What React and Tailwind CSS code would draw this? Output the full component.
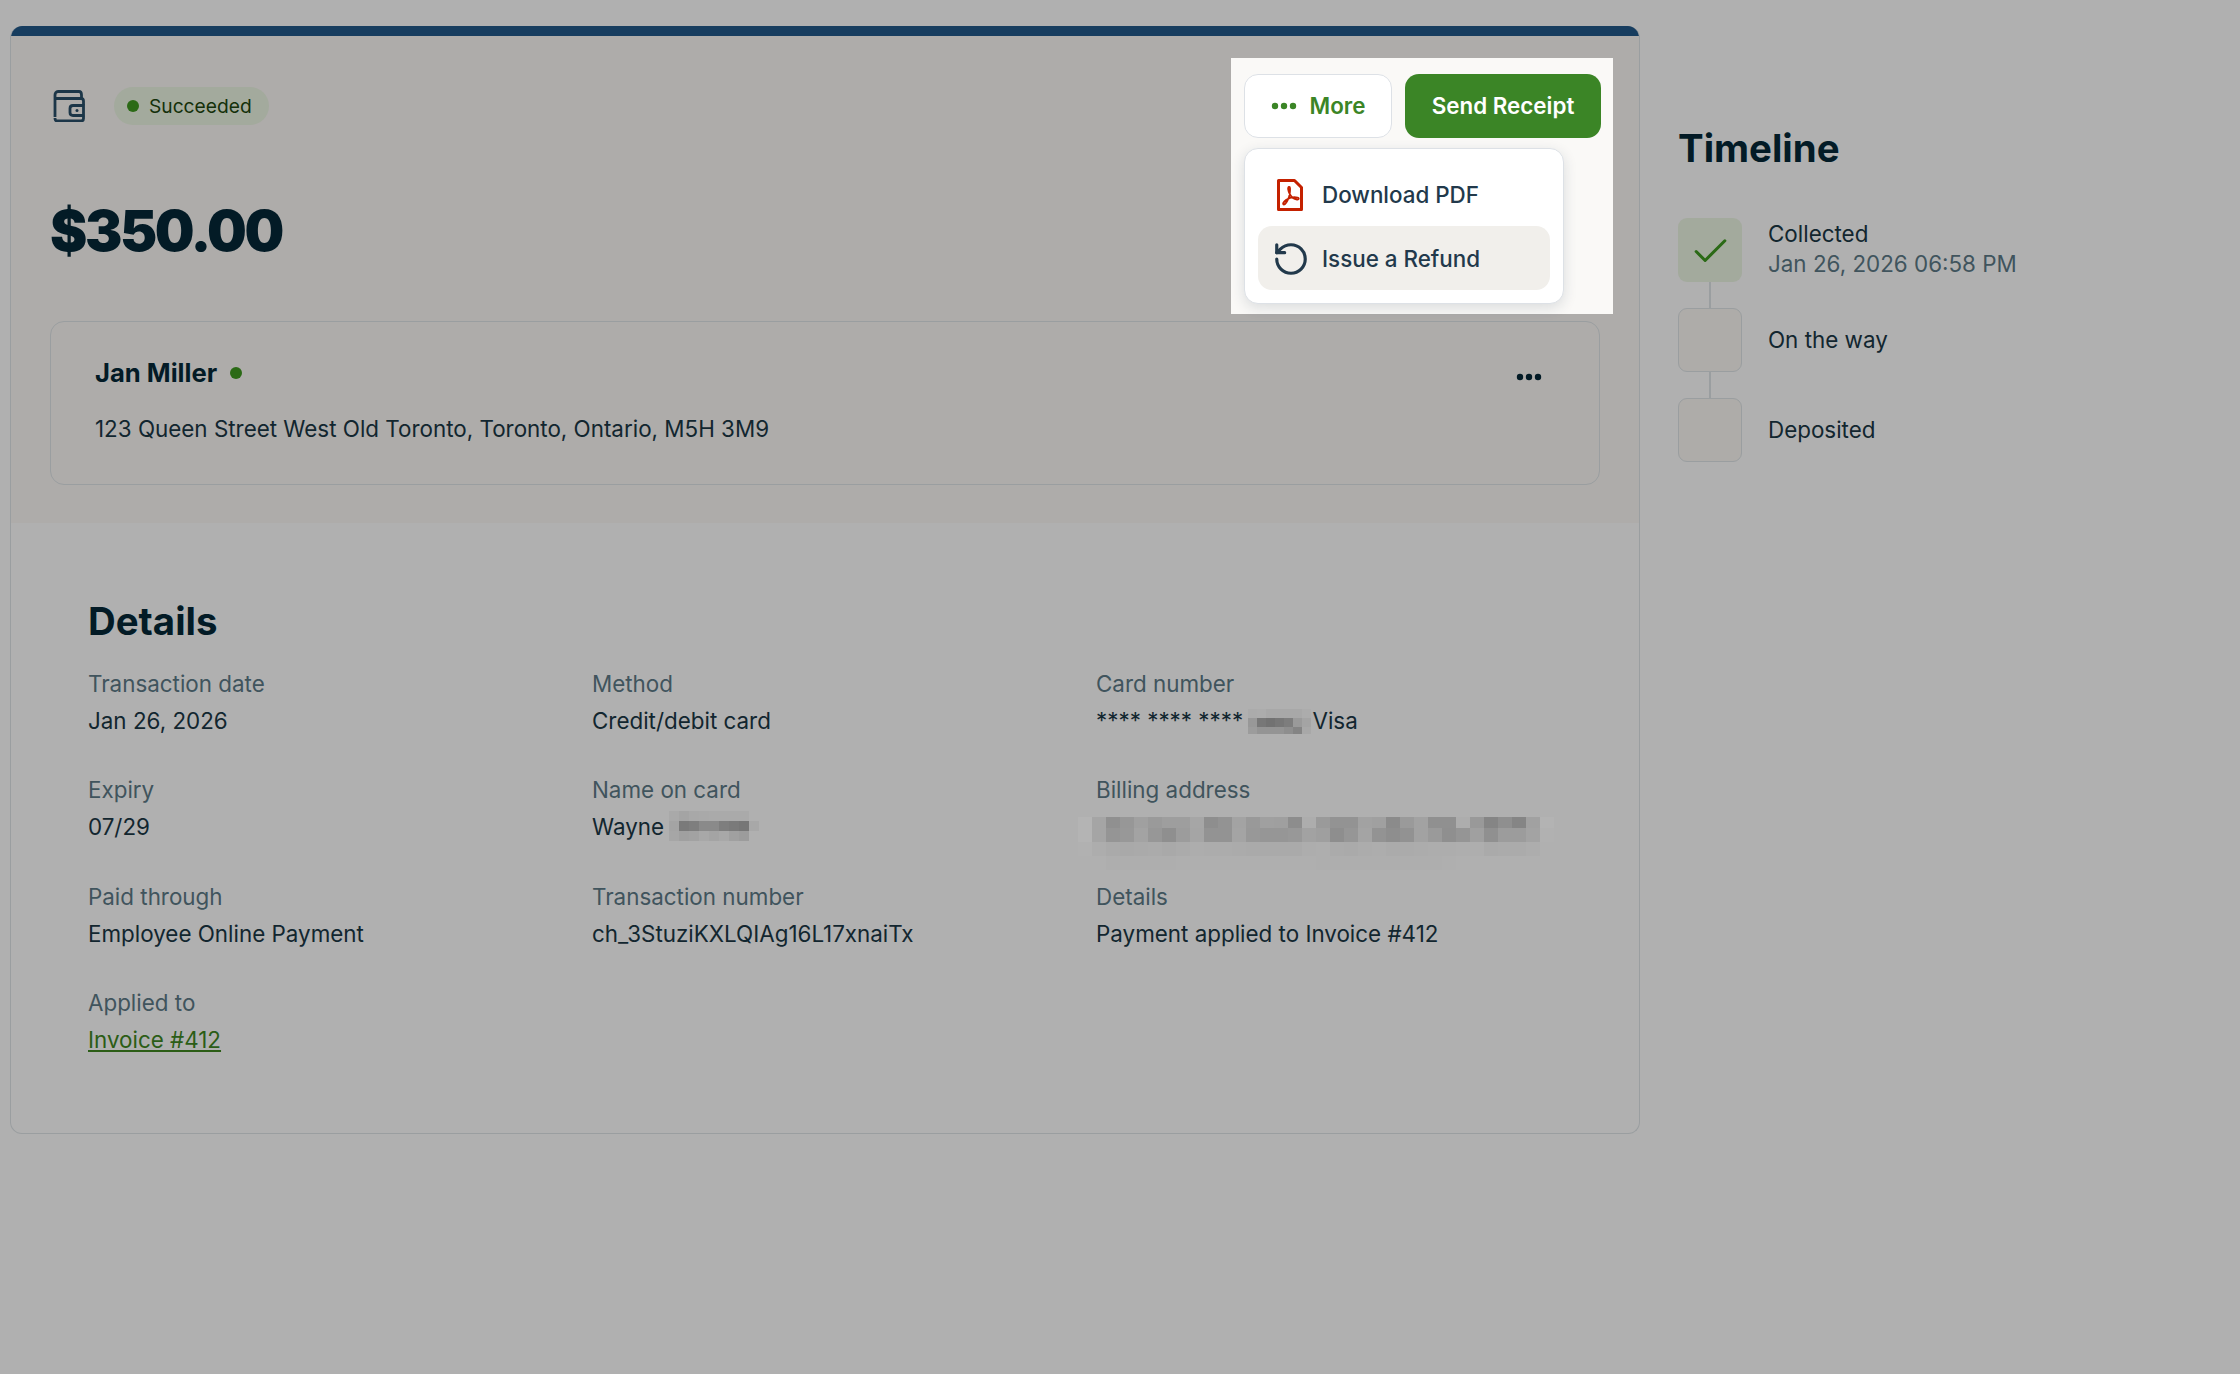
import { Check, RotateCcw } from 'lucide-react';

const billingRows = [
  'b4 a5 90 97 a0 9a 9e 9e a6 8e 93 a3 99 a0 9f 8d ad 9a 93 93 a2 a0 8b 9a a2 90 90 ad 99 85 8f 85 a1 b3 b0',
  'b4 a5 95 98 a3 97 8f 9c a5 93 93 a4 98 96 96 98 a2 9f 8e 96 a4 93 8e 92 a2 9a 8f 95 a0 90 9c 9c a3 b1 b0',
  'b1 ad aa a9 aa ab a9 ab ad ac ac ab aa aa aa aa ad ae ab aa ac ad ab ab ac ad ad ae ae aa ab ab ad b0 b0',
  'b0 b0 ae ae ae ae ae af af af af af af af af af af ae ae ae ae ae ae ae ae ae af b0 b0 b0 b0 b0 b0 b0 b0',
];

const visaRows = [
  'ab ac a8 a8 a8 a8 ac',
  '98 77 72 77 7d 9a a4',
  '9c 94 94 94 8e 84 a8',
];

const wayneRows = [
  'a9 a4 a8 a9 aa aa aa aa b0',
  'a4 7a 7e 8a 8a 7e 7a 76 a8',
  'a6 a0 a2 a8 a4 a8 a0 9c b0',
];

// pixelated blocks that hide the private bits in the screenshot
function Mosaic({ rows, cell, shift = 0, className }) {
  const grid = rows.map((r) => r.split(' '));
  return (
    <svg width={grid[0].length * cell} height={grid.length * cell - shift} className={className}>
      {grid.map((row, y) =>
        row.map((v, x) => (
          <rect key={x} x={x * cell} y={y * cell - shift} width={cell} height={cell} fill={`#${v}${v}${v}`} />
        )),
      )}
    </svg>
  );
}

function Dots({ className }) {
  return (
    <svg width="26" height="8" viewBox="0 0 26 8" fill="currentColor" className={className}>
      <circle cx="4" cy="4" r="3.2" />
      <circle cx="13" cy="4" r="3.2" />
      <circle cx="22" cy="4" r="3.2" />
    </svg>
  );
}

function WalletIcon() {
  return (
    <svg width="32" height="32" viewBox="0 0 32 32" fill="none" stroke="#1c3648" strokeWidth="2.8" strokeLinejoin="round">
      <path d="M2 27V5c0-2 1-3.500 3-3.500h21c2 0 2.500 1.500 2.500 3.500v3.500" />
      <path d="M2 8.500h26c2 0 2.500 1 2.500 2.500v4.500" />
      <path d="M30.500 25.500v3c0 1.500-1 2.500-2.500 2.500H4c-1.500 0-2-1.500-2-3" />
      <path d="M30.500 15.500H20c-1.500 0-3 1-3 3v4c0 2 1.500 3 3 3h10.500z" />
      <circle cx="24" cy="20.500" r="1.500" fill="#1c3648" stroke="none" />
    </svg>
  );
}

function PdfIcon() {
  return (
    <svg width="26" height="32" viewBox="0 0 26 32" fill="none" stroke="#c42100" className="shrink-0">
      <path d="M1.500 1.500h16l7 7v22h-23z" strokeWidth="3" strokeLinejoin="round" />
      <path
        d="M12 8c-1.500 0-1 4 1 7.500 1.500 2.700 4 4.500 7 5 2 .3 2.500-1.500.5-2-3.500-.8-8.500.3-11.500 2.500-2.500 1.800-3.500 4-2.500 4.500 1.500.5 4-3.500 5.500-7.500 1-2.800 1.500-10 .5-10z"
        strokeWidth="1.800"
        strokeLinejoin="round"
      />
    </svg>
  );
}

function Field({ label, children }) {
  return (
    <div className="flex flex-col gap-[5px]">
      <div className="h-8 leading-8 text-[#40545d]">{label}</div>
      <div className="h-8 leading-8 text-[#12262f]">{children}</div>
    </div>
  );
}

function Step({ done, last, children }) {
  return (
    <div className="flex gap-[26px]">
      <div className="flex flex-col items-center">
        {done ? (
          <div className="w-16 h-16 pt-[2px] rounded-[9px] bg-[#a3aa9d] flex items-center justify-center">
            <Check size={43} strokeWidth={1.7} className="text-[#2b6a16]" />
          </div>
        ) : (
          <div className="w-16 h-16 rounded-[9px] bg-[#aeaca9] border border-[#9a9ea0]" />
        )}
        {!last && <div className="w-[2px] h-[26px] bg-[#9a9ea0]" />}
      </div>
      <div className="h-16 flex flex-col justify-center leading-[30px] text-[#12262f]">{children}</div>
    </div>
  );
}

export default function App() {
  return (
    <div className="min-h-screen bg-[#b0b0b0] flex items-start pt-[26px] pl-[10px] text-[22.4px] font-['Inter',sans-serif]">
      <div className="w-[1630px] h-[1108px] rounded-[12px] border-x border-b border-[#9a9ea0] border-t-0 overflow-hidden">
        <div className="h-[10px] bg-[#173d5f] -mx-px" />

        <div className="relative h-[487px] bg-[#aeacaa] px-[39px] pt-[51px]">
          <div className="flex items-center gap-[29px] pl-[3px]">
            <WalletIcon />
            <div className="h-[38px] rounded-full bg-[#a3aa9d] flex items-center gap-[10px] pl-[13px] pr-[17px] text-[19.2px] text-[#14300a]">
              <span className="w-3 h-3 rounded-full bg-[#2b6a16]" />
              Succeeded
            </div>
          </div>

          <div className="mt-[71px] h-[70px] leading-[70px] text-[56px] font-black tracking-[-0.043em] text-[#031b26]">$350.00</div>

          <div className="mt-[55px] h-[164px] rounded-[14px] border border-[#9a9ea0] pl-[44px] pr-[57px] pt-[33px] flex justify-between">
            <div>
              <div className="flex items-center gap-[13px] h-9 font-bold text-[25.6px] text-[#031b26]">
                Jan Miller
                <span className="w-3 h-3 rounded-full bg-[#2b6a16]" />
              </div>
              <div className="mt-[22px] h-8 leading-8 text-[#12262f]">
                123 Queen Street West Old Toronto, Toronto, Ontario, M5H 3M9
              </div>
            </div>
            <Dots className="mt-[18px] text-[#031b26]" />
          </div>

          {/* the one part of the page left lit above the dim layer */}
          <div className="absolute top-[22px] right-[26px] w-[382px] h-[256px] bg-[#faf9f7] pl-[13px] pt-4">
            <div className="flex gap-[13px]">
              <button className="w-[148px] h-16 rounded-[14px] bg-white border border-[#dde1e6] flex items-center justify-center gap-[13px] font-semibold text-[#3b8526]">
                <Dots />
                More
              </button>
              <button className="w-[196px] h-16 rounded-[14px] bg-[#3b8526] font-semibold text-white">Send Receipt</button>
            </div>
            <div className="mt-[10px] w-[320px] h-[156px] rounded-[14px] bg-white border border-[#dde1e6] shadow-[0_4px_14px_rgba(30,50,70,0.14)] p-[13px] font-medium text-[#22394b]">
              <div className="h-16 pt-[2px] flex items-center gap-[19px] pl-[19px]">
                <PdfIcon />
                Download PDF
              </div>
              <div className="h-16 pt-[2px] flex items-center gap-[12px] pl-[14px] rounded-[14px] bg-[#f1efeb]">
                <RotateCcw size={38} strokeWidth={2} className="shrink-0" />
                Issue a Refund
              </div>
            </div>
          </div>
        </div>

        <div className="px-[77px] pt-[76px]">
          <h2 className="h-11 leading-[44px] text-[38.4px] font-bold text-[#031b26]">Details</h2>
          <div className="mt-[25px] grid grid-cols-[504px_504px_1fr] gap-y-[37.4px]">
            <Field label="Transaction date">Jan 26, 2026</Field>
            <Field label="Method">Credit/debit card</Field>
            <Field label="Card number">
              <span className="flex items-center">
                **** **** ****&nbsp;
                <Mosaic rows={visaRows} cell={9} className="w-[65px] h-[25px] -ml-[2px]" />
                Visa
              </span>
            </Field>
            <Field label="Expiry">07/29</Field>
            <Field label="Name on card">
              <span className="flex items-center">
                Wayne
                <Mosaic rows={wayneRows} cell={10} className="ml-[5px] -mt-[2px]" />
              </span>
            </Field>
            <Field label="Billing address">
              <Mosaic rows={billingRows} cell={14} shift={3} className="-ml-[18px] mt-[6px]" />
            </Field>
            <Field label="Paid through">Employee Online Payment</Field>
            <Field label="Transaction number">ch_3StuziKXLQIAg16L17xnaiTx</Field>
            <Field label="Details">Payment applied to Invoice #412</Field>
            <Field label="Applied to">
              <a href="#" className="underline text-[#2b5d16]">Invoice #412</a>
            </Field>
          </div>
        </div>
      </div>

      <aside className="ml-[38px] pt-[100px]">
        <h2 className="h-11 leading-[44px] text-[38.4px] font-bold text-[#031b26]">Timeline</h2>
        <div className="mt-[48px] flex flex-col">
          <Step done>
            <div className="-mt-[2px]">Collected</div>
            <div className="text-[#40545d]">Jan 26, 2026 06:58 PM</div>
          </Step>
          <Step>On the way</Step>
          <Step last>Deposited</Step>
        </div>
      </aside>
    </div>
  );
}
